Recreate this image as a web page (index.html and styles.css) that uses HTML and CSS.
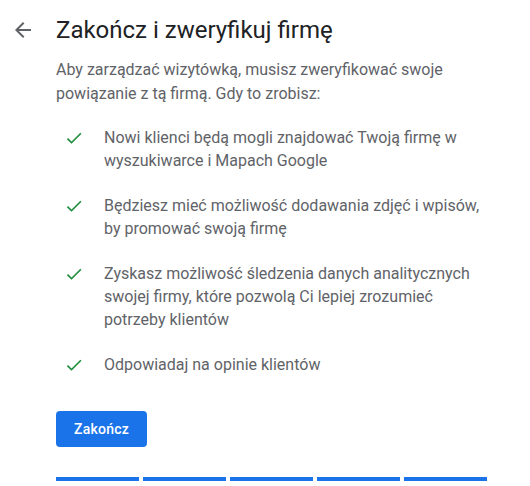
FILE: index.html
```html
<!DOCTYPE html>
<html lang="pl">
<head>
  <meta charset="UTF-8" />
  <meta name="viewport" content="width=device-width, initial-scale=1" />
  <title>Zakończ i zweryfikuj firmę</title>
  <link rel="stylesheet" href="styles.css">
</head>
<body>

  <div class="page">
    <div class="header">
      <button class="back-btn" aria-label="Wstecz">
        <svg viewBox="0 0 24 24" width="24" height="24"><path d="M20 11H7.83l5.59-5.59L12 4l-8 8 8 8 1.41-1.41L7.83 13H20v-2z"/></svg>
      </button>
      <h1>Zakończ i zweryfikuj firmę</h1>
    </div>

    <div class="content">
      <p class="intro">Aby zarządzać wizytówką, musisz zweryfikować swoje powiązanie z tą firmą. Gdy to zrobisz:</p>

      <ul class="benefits">
        <li>
          <svg class="check" viewBox="0 0 24 24" width="20" height="20"><path d="M9 16.17L4.83 12l-1.42 1.41L9 19 21 7l-1.41-1.41z"/></svg>
          <span>Nowi klienci będą mogli znajdować Twoją firmę w wyszukiwarce i Mapach Google</span>
        </li>
        <li>
          <svg class="check" viewBox="0 0 24 24" width="20" height="20"><path d="M9 16.17L4.83 12l-1.42 1.41L9 19 21 7l-1.41-1.41z"/></svg>
          <span>Będziesz mieć możliwość dodawania zdjęć i wpisów, by promować swoją firmę</span>
        </li>
        <li>
          <svg class="check" viewBox="0 0 24 24" width="20" height="20"><path d="M9 16.17L4.83 12l-1.42 1.41L9 19 21 7l-1.41-1.41z"/></svg>
          <span>Zyskasz możliwość śledzenia danych analitycznych swojej firmy, które pozwolą Ci lepiej zrozumieć potrzeby klientów</span>
        </li>
        <li>
          <svg class="check" viewBox="0 0 24 24" width="20" height="20"><path d="M9 16.17L4.83 12l-1.42 1.41L9 19 21 7l-1.41-1.41z"/></svg>
          <span>Odpowiadaj na opinie klientów</span>
        </li>
      </ul>

      <button class="primary-btn">Zakończ</button>

      <div class="progress">
        <span></span>
        <span></span>
        <span></span>
        <span></span>
        <span></span>
      </div>
    </div>
  </div>

</body>
</html>
```

FILE: styles.css
```css
body {
  margin: 0;
  font-family: Roboto, "Liberation Sans", sans-serif;
  background: #fff;
  color: #5f6368;
}

.page {
  padding-top: 14px;
}

.header {
  display: flex;
  align-items: center;
  gap: 21px;
  padding-left: 11px;
}

.back-btn {
  background: none;
  border: none;
  padding: 0;
  width: 24px;
  height: 24px;
  cursor: pointer;
}

.back-btn svg {
  display: block;
  fill: #5f6368;
}

h1 {
  margin: 0;
  font-size: 24px;
  line-height: 32px;
  font-weight: 400;
  color: #202124;
}

.content {
  padding-left: 56px;
}

.intro {
  margin: 12px 0 0;
  width: 420px;
  font-size: 16px;
  line-height: 24px;
}

.benefits {
  list-style: none;
  margin: 20px 0 0;
  padding: 0 0 0 8px;
}

.benefits li {
  display: flex;
  align-items: flex-start;
  gap: 20px;
  width: 428px;
  margin-bottom: 22px;
  font-size: 16px;
  line-height: 23px;
}

.benefits li:last-child {
  margin-bottom: 0;
}

.check {
  flex-shrink: 0;
  margin-top: 2px;
  fill: #1e8e3e;
}

.primary-btn {
  display: block;
  margin-top: 35px;
  height: 36px;
  padding: 0 18px;
  background: #1a73e8;
  color: #fff;
  border: none;
  border-radius: 4px;
  font-family: Roboto, "Liberation Sans", sans-serif;
  font-size: 14px;
  font-weight: 500;
  letter-spacing: 0.25px;
  cursor: pointer;
}

.progress {
  display: flex;
  gap: 4px;
  margin-top: 30px;
}

.progress span {
  width: 83px;
  height: 4px;
  background: #1a73e8;
}
```
